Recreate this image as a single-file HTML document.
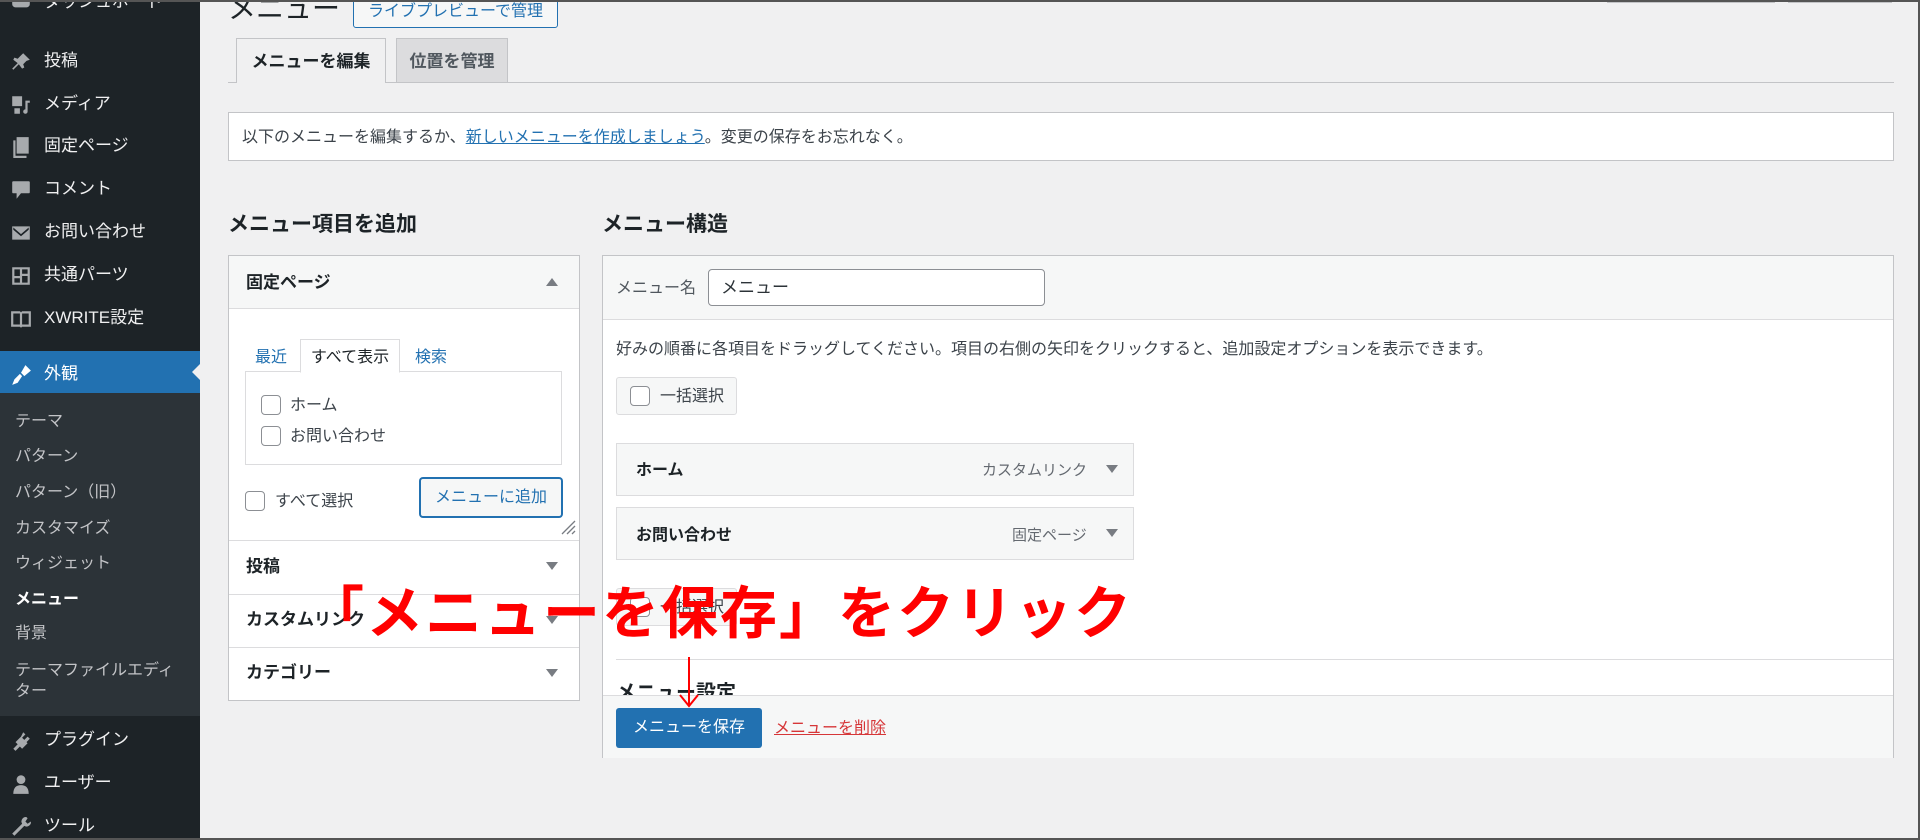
<!DOCTYPE html>
<html><head><meta charset="utf-8"><style>
*{box-sizing:border-box;margin:0;padding:0}
body{width:1920px;height:840px;overflow:hidden;background:#f0f0f1;font-family:"Liberation Sans","Noto Sans CJK JP",sans-serif;color:#1d2327;position:relative}
.abs{position:absolute}
#side{left:0;top:0;width:200px;height:840px;background:#1d2327}
.mi{position:absolute;left:0;width:200px;color:#f0f0f1;font-size:17px;line-height:20px}
.mi .t{position:absolute;left:44px;white-space:nowrap}
.ic{position:absolute;left:10px;width:22px;height:22px;fill:#a7aaad}
.sub{position:absolute;left:15px;color:#c3c4c7;font-size:16px;white-space:nowrap;line-height:20px}
.box{position:absolute;background:#fff;border:1px solid #c3c4c7}
.cb{position:absolute;width:20px;height:20px;border:1px solid #8c8f94;border-radius:4px;background:#fff}
.tri{position:absolute;width:0;height:0;border-left:6px solid transparent;border-right:6px solid transparent}
.dn{border-top:8px solid #787c82}.up{border-bottom:8px solid #787c82}
.b{font-weight:bold}
</style></head><body>
<div id="side" class="abs">
  <div class="mi" style="top:-8px"><svg class="ic" viewBox="0 0 20 20" style="top:0"><rect x="2" y="4" width="16" height="10" rx="3"/></svg><span class="t" style="top:0">ダッシュボード</span></div>
  <div class="mi" style="top:51px"><svg class="ic" viewBox="0 0 20 20"><path d="M12 2l6 6-3 1-3 3 1 3-2 1-3-4-5 5-1-1 5-5-4-3 1-2 3 1 3-3z"/></svg><span class="t">投稿</span></div>
  <div class="mi" style="top:94px"><svg class="ic" viewBox="0 0 20 20"><path d="M2 2h9v9H2zM13 6h5v2h-2v8a2 2 0 1 1-2-2V6zM4 13h5v5H4z"/></svg><span class="t">メディア</span></div>
  <div class="mi" style="top:136px"><svg class="ic" viewBox="0 0 20 20"><path d="M6 1h11v15H6zM3 4h2v14h10v2H3z"/></svg><span class="t">固定ページ</span></div>
  <div class="mi" style="top:179px"><svg class="ic" viewBox="0 0 20 20"><path d="M3 2h14a1 1 0 0 1 1 1v9a1 1 0 0 1-1 1h-7l-4 5v-5H3a1 1 0 0 1-1-1V3a1 1 0 0 1 1-1z"/></svg><span class="t">コメント</span></div>
  <div class="mi" style="top:222px"><svg class="ic" viewBox="0 0 20 20"><path d="M2 4h16v12H2zM3 5l7 6 7-6v2l-7 6-7-6z" fill-rule="evenodd"/></svg><span class="t">お問い合わせ</span></div>
  <div class="mi" style="top:265px"><svg class="ic" viewBox="0 0 20 20"><path d="M2 2h16v16H2zM4 4v6h5V4zm7 0v4h5V4zm0 6v6h5v-6zM4 12v4h5v-4z" fill-rule="evenodd"/></svg><span class="t">共通パーツ</span></div>
  <div class="mi" style="top:308px"><svg class="ic" viewBox="0 0 20 20"><path d="M1 3h8l1 1 1-1h8v14h-8l-1 1-1-1H1zM3 5v10h6V5zm8 0v10h6V5z" fill-rule="evenodd"/></svg><span class="t">XWRITE設定</span></div>
  <div class="abs" style="left:0;top:351px;width:200px;height:42px;background:#2271b1"></div>
  <div class="abs" style="left:192px;top:364px;border-right:8px solid #f0f0f1;border-top:8px solid transparent;border-bottom:8px solid transparent"></div>
  <div class="mi" style="top:364px;color:#fff"><svg class="ic" viewBox="0 0 20 20" style="fill:#fff"><path d="M14 1l5 5-6 5-3-3zM9 9l2 2-4 6-5 2 2-5z"/></svg><span class="t">外観</span></div>
  <div class="abs" style="left:0;top:393px;width:200px;height:323px;background:#2c3338"></div>
  <div class="sub" style="top:412px">テーマ</div>
  <div class="sub" style="top:447px">パターン</div>
  <div class="sub" style="top:483px">パターン（旧）</div>
  <div class="sub" style="top:519px">カスタマイズ</div>
  <div class="sub" style="top:554px">ウィジェット</div>
  <div class="sub b" style="top:590px;color:#fff">メニュー</div>
  <div class="sub" style="top:624px">背景</div>
  <div class="sub" style="top:661px">テーマファイルエディ</div>
  <div class="sub" style="top:682px">ター</div>
  <div class="mi" style="top:730px"><svg class="ic" viewBox="0 0 20 20"><path d="M12 2l2 2-3 3 2 2 3-3 2 2-3 3 1 1-5 5-2-2-4 4-2-2 4-4-2-2 5-5z"/></svg><span class="t">プラグイン</span></div>
  <div class="mi" style="top:773px"><svg class="ic" viewBox="0 0 20 20"><circle cx="10" cy="6" r="4"/><path d="M3 19c0-6 3-8 7-8s7 2 7 8z"/></svg><span class="t">ユーザー</span></div>
  <div class="mi" style="top:816px"><svg class="ic" viewBox="0 0 20 20"><path d="M15 1a4 4 0 0 0-4 6L2 16l2 2 9-9a4 4 0 0 0 6-4l-3 2-2-2 2-3z"/></svg><span class="t">ツール</span></div>
</div>

<div class="abs" style="left:228px;top:-11px;font-size:28px;color:#1d2327;line-height:40px">メニュー</div>
<div class="abs" style="left:353px;top:-4px;width:205px;height:32px;border:1px solid #2271b1;border-radius:3px;background:#f6f7f7;color:#2271b1;font-size:16px;line-height:30px;text-align:center">ライブプレビューで管理</div>
<div class="abs" style="left:1607px;top:-10px;width:168px;height:13px;border:1px solid #c3c4c7;background:#fff"></div>
<div class="abs" style="left:1788px;top:-10px;width:104px;height:13px;border:1px solid #c3c4c7;background:#fff"></div>
<div class="abs" style="left:228px;top:82px;width:1666px;height:1px;background:#c3c4c7"></div>
<div class="abs b" style="left:236px;top:38px;width:150px;height:45px;border:1px solid #c3c4c7;border-bottom:none;background:#f0f0f1;font-size:17px;line-height:46px;text-align:center">メニューを編集</div>
<div class="abs b" style="left:396px;top:38px;width:112px;height:44px;border:1px solid #c3c4c7;border-bottom:none;background:#dcdcde;color:#50575e;font-size:17px;line-height:46px;text-align:center">位置を管理</div>

<div class="box" style="left:228px;top:112px;width:1666px;height:49px;font-size:16px;line-height:50px;padding-left:13px;color:#3c434a">以下のメニューを編集するか、<span style="color:#2271b1;text-decoration:underline">新しいメニューを作成しましょう</span>。変更の保存をお忘れなく。</div>

<div class="abs b" style="left:228px;top:211px;font-size:21px;line-height:28px">メニュー項目を追加</div>
<div class="abs b" style="left:602px;top:211px;font-size:21px;line-height:28px">メニュー構造</div>

<div class="box" style="left:228px;top:255px;width:352px;height:446px"></div>
<div class="abs" style="left:229px;top:256px;width:350px;height:53px;background:#f6f7f7;border-bottom:1px solid #dcdcde"></div>
<div class="abs b" style="left:246px;top:271px;font-size:17px;line-height:24px">固定ページ</div>
<div class="tri up" style="left:546px;top:278px"></div>
<div class="abs" style="left:255px;top:348px;font-size:16px;color:#2271b1;line-height:20px">最近</div>
<div class="abs" style="left:300px;top:339px;width:100px;height:34px;border:1px solid #dcdcde;border-bottom:1px solid #fff;background:#fff;font-size:16px;line-height:36px;text-align:center;z-index:2">すべて表示</div>
<div class="abs" style="left:415px;top:348px;font-size:16px;color:#2271b1;line-height:20px">検索</div>
<div class="abs" style="left:245px;top:371px;width:317px;height:94px;border:1px solid #dcdcde;background:#fff"></div>
<div class="cb" style="left:261px;top:395px"></div><div class="abs" style="left:290px;top:396px;font-size:16px;color:#3c434a;line-height:20px">ホーム</div>
<div class="cb" style="left:261px;top:426px"></div><div class="abs" style="left:290px;top:427px;font-size:16px;color:#3c434a;line-height:20px">お問い合わせ</div>
<div class="cb" style="left:245px;top:491px"></div><div class="abs" style="left:275px;top:492px;font-size:16px;color:#3c434a;line-height:20px">すべて選択</div>
<div class="abs" style="left:420px;top:478px;width:142px;height:39px;border:1px solid #2271b1;border-radius:3px;background:#f6f7f7;box-shadow:0 0 0 1px #2271b1;color:#2271b1;font-size:16px;line-height:38px;text-align:center">メニューに追加</div>
<svg class="abs" style="left:560px;top:519px" width="16" height="16"><path d="M15 2L2 15M15 7L7 15M15 12L12 15" stroke="#787c82" stroke-width="1.3"/></svg>
<div class="abs" style="left:229px;top:540px;width:350px;height:1px;background:#dcdcde"></div>
<div class="abs b" style="left:246px;top:555px;font-size:17px;line-height:24px">投稿</div><div class="tri dn" style="left:546px;top:562px"></div>
<div class="abs" style="left:229px;top:594px;width:350px;height:1px;background:#dcdcde"></div>
<div class="abs b" style="left:246px;top:608px;font-size:17px;line-height:24px">カスタムリンク</div><div class="tri dn" style="left:546px;top:616px"></div>
<div class="abs" style="left:229px;top:647px;width:350px;height:1px;background:#dcdcde"></div>
<div class="abs b" style="left:246px;top:661px;font-size:17px;line-height:24px">カテゴリー</div><div class="tri dn" style="left:546px;top:669px"></div>

<div class="box" style="left:602px;top:255px;width:1292px;height:503px;border-bottom:none"></div>
<div class="abs" style="left:603px;top:256px;width:1290px;height:64px;background:#f6f7f7;border-bottom:1px solid #dcdcde"></div>
<div class="abs" style="left:616px;top:279px;font-size:16px;color:#50575e;line-height:20px">メニュー名</div>
<div class="abs" style="left:708px;top:269px;width:337px;height:37px;border:1px solid #8c8f94;border-radius:4px;background:#fff;font-size:17px;line-height:35px;padding-left:12px;color:#2c3338">メニュー</div>
<div class="abs" style="left:616px;top:340px;font-size:16px;color:#3c434a;line-height:20px">好みの順番に各項目をドラッグしてください。項目の右側の矢印をクリックすると、追加設定オプションを表示できます。</div>
<div class="abs" style="left:616px;top:377px;width:121px;height:38px;border:1px solid #dcdcde;border-radius:3px;background:#f6f7f7"></div>
<div class="cb" style="left:630px;top:386px"></div><div class="abs" style="left:660px;top:387px;font-size:16px;color:#3c434a;line-height:20px">一括選択</div>
<div class="abs" style="left:616px;top:443px;width:518px;height:53px;border:1px solid #dcdcde;background:#f6f7f7"></div>
<div class="abs b" style="left:636px;top:461px;font-size:16px;line-height:20px">ホーム</div>
<div class="abs" style="left:982px;top:461px;font-size:15px;color:#646970;line-height:20px">カスタムリンク</div><div class="tri dn" style="left:1106px;top:465px"></div>
<div class="abs" style="left:616px;top:507px;width:518px;height:53px;border:1px solid #dcdcde;background:#f6f7f7"></div>
<div class="abs b" style="left:636px;top:526px;font-size:16px;line-height:20px">お問い合わせ</div>
<div class="abs" style="left:1012px;top:526px;font-size:15px;color:#646970;line-height:20px">固定ページ</div><div class="tri dn" style="left:1106px;top:529px"></div>
<div class="abs" style="left:616px;top:588px;width:121px;height:38px;border:1px solid #dcdcde;border-radius:3px;background:#f6f7f7"></div>
<div class="cb" style="left:630px;top:597px"></div><div class="abs" style="left:660px;top:598px;font-size:16px;color:#3c434a;line-height:20px">一括選択</div>
<div class="abs" style="left:616px;top:659px;width:1277px;height:1px;background:#dcdcde"></div>
<div class="abs b" style="left:616px;top:680px;font-size:20px;line-height:26px">メニュー設定</div>
<div class="abs" style="left:603px;top:695px;width:1290px;height:63px;background:#f6f7f7;border-top:1px solid #dcdcde"></div>
<div class="abs" style="left:616px;top:708px;width:146px;height:40px;background:#2271b1;border-radius:3px;color:#fff;font-size:16px;line-height:40px;text-align:center">メニューを保存</div>
<div class="abs" style="left:774px;top:719px;font-size:16px;color:#d63638;text-decoration:underline;line-height:20px">メニューを削除</div>

<div class="abs b" style="left:307px;top:574px;font-size:57px;line-height:70px;color:#ff0000;white-space:nowrap;letter-spacing:2px;font-family:'Noto Sans CJK JP',sans-serif">「メニューを保存」をクリック</div>
<div class="abs" style="left:688px;top:657px;width:2px;height:48px;background:#ff0000"></div>
<svg class="abs" style="left:679px;top:694px" width="20" height="14"><path d="M1 1L10 12L19 1" stroke="#ff0000" stroke-width="2" fill="none"/></svg>

<div class="abs" style="left:0;top:0;width:1920px;height:840px;border:2px solid #555;border-left:none;pointer-events:none"></div>
</body></html>
